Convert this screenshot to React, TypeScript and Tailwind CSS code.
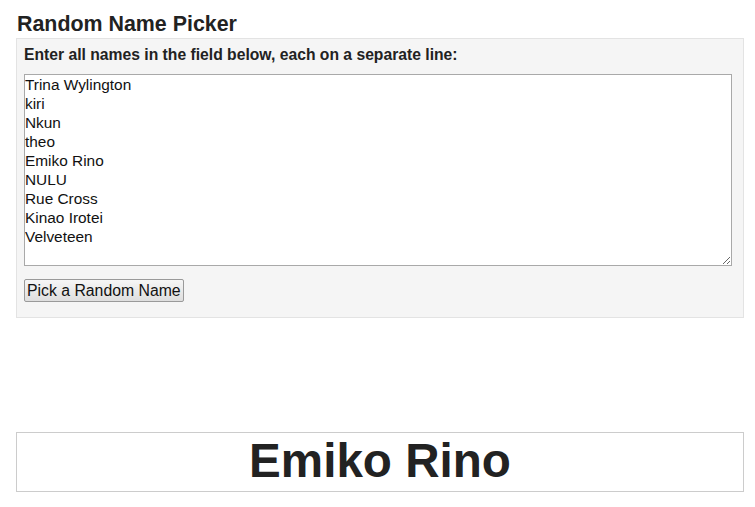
import React from "react";

const names = [
  "Trina Wylington",
  "kiri",
  "Nkun",
  "theo",
  "Emiko Rino",
  "NULU",
  "Rue Cross",
  "Kinao Irotei",
  "Velveteen",
];

export default function App() {
  return (
    <div className="w-[755px] h-[507px] bg-white text-[#222] font-['Liberation_Sans',Arial,sans-serif] overflow-hidden">
      <div className="pl-[16px] pt-[12px] w-[744px]">
        <h2 className="text-[21.4px] leading-[24px] font-bold pl-[1px] h-[26px]">Random Name Picker</h2>
        <div className="bg-[#f5f5f5] border border-[#e3e3e3] pl-[7px] pr-[12px] pt-[6px] pb-[15px] h-[280px]">
          <div className="text-[15.7px] leading-[18px] font-bold text-[#222] pt-[1px]">
            Enter all names in the field below, each on a separate line:
          </div>
          <textarea
            className="block mt-[10px] w-[708px] h-[192px] bg-white border border-[#a9a9a9] text-[15.4px] leading-[19px] text-[#111] px-[0px] pt-0 resize-y outline-none font-['Liberation_Sans',Arial,sans-serif]"
            defaultValue={names.join("\n")}
          />
          <button className="mt-[13px] h-[23px] px-[2px] text-[15.8px] leading-[20px] text-[#111] border border-[#9a9a9a] rounded-[2px] bg-gradient-to-b from-[#f6f6f6] to-[#dedede] font-['Liberation_Sans',Arial,sans-serif]">
            Pick a Random Name
          </button>
        </div>
        <div className="mt-[114px] h-[60px] border border-[#cccccc] flex items-center justify-center">
          <span className="text-[47.6px] leading-[56px] font-bold text-[#222] pb-[2px]">Emiko Rino</span>
        </div>
      </div>
    </div>
  );
}
